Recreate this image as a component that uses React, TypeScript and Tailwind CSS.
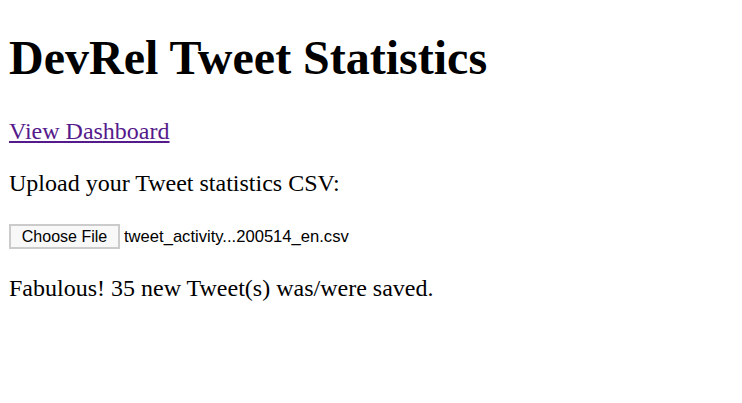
import React from "react";

const App = () => {
  return (
    <div className="min-h-[403px] bg-white px-[9px] pt-[1px] font-['Liberation_Serif',serif] text-[24px] leading-[normal] text-black">
      <h1 className="mt-[29px] mb-[33px] text-[48px] font-bold leading-[normal]">
        DevRel Tweet Statistics
      </h1>
      <a href="#" className="text-[#551a8b] underline">
        View Dashboard
      </a>
      <p className="mt-[25px] mb-[27px]">Upload your Tweet statistics CSV:</p>
      <div className="flex items-center gap-[4px] font-['Liberation_Sans',sans-serif] text-[16.6px]">
        <button className="h-[25px] w-[111px] border-2 border-[#cbcbcb] bg-[#f8f8f8] text-[16px] text-black">
          Choose File
        </button>
        <span>tweet_activity...200514_en.csv</span>
      </div>
      <p className="mt-[26px]">Fabulous! 35 new Tweet(s) was/were saved.</p>
    </div>
  );
};

export default App;
